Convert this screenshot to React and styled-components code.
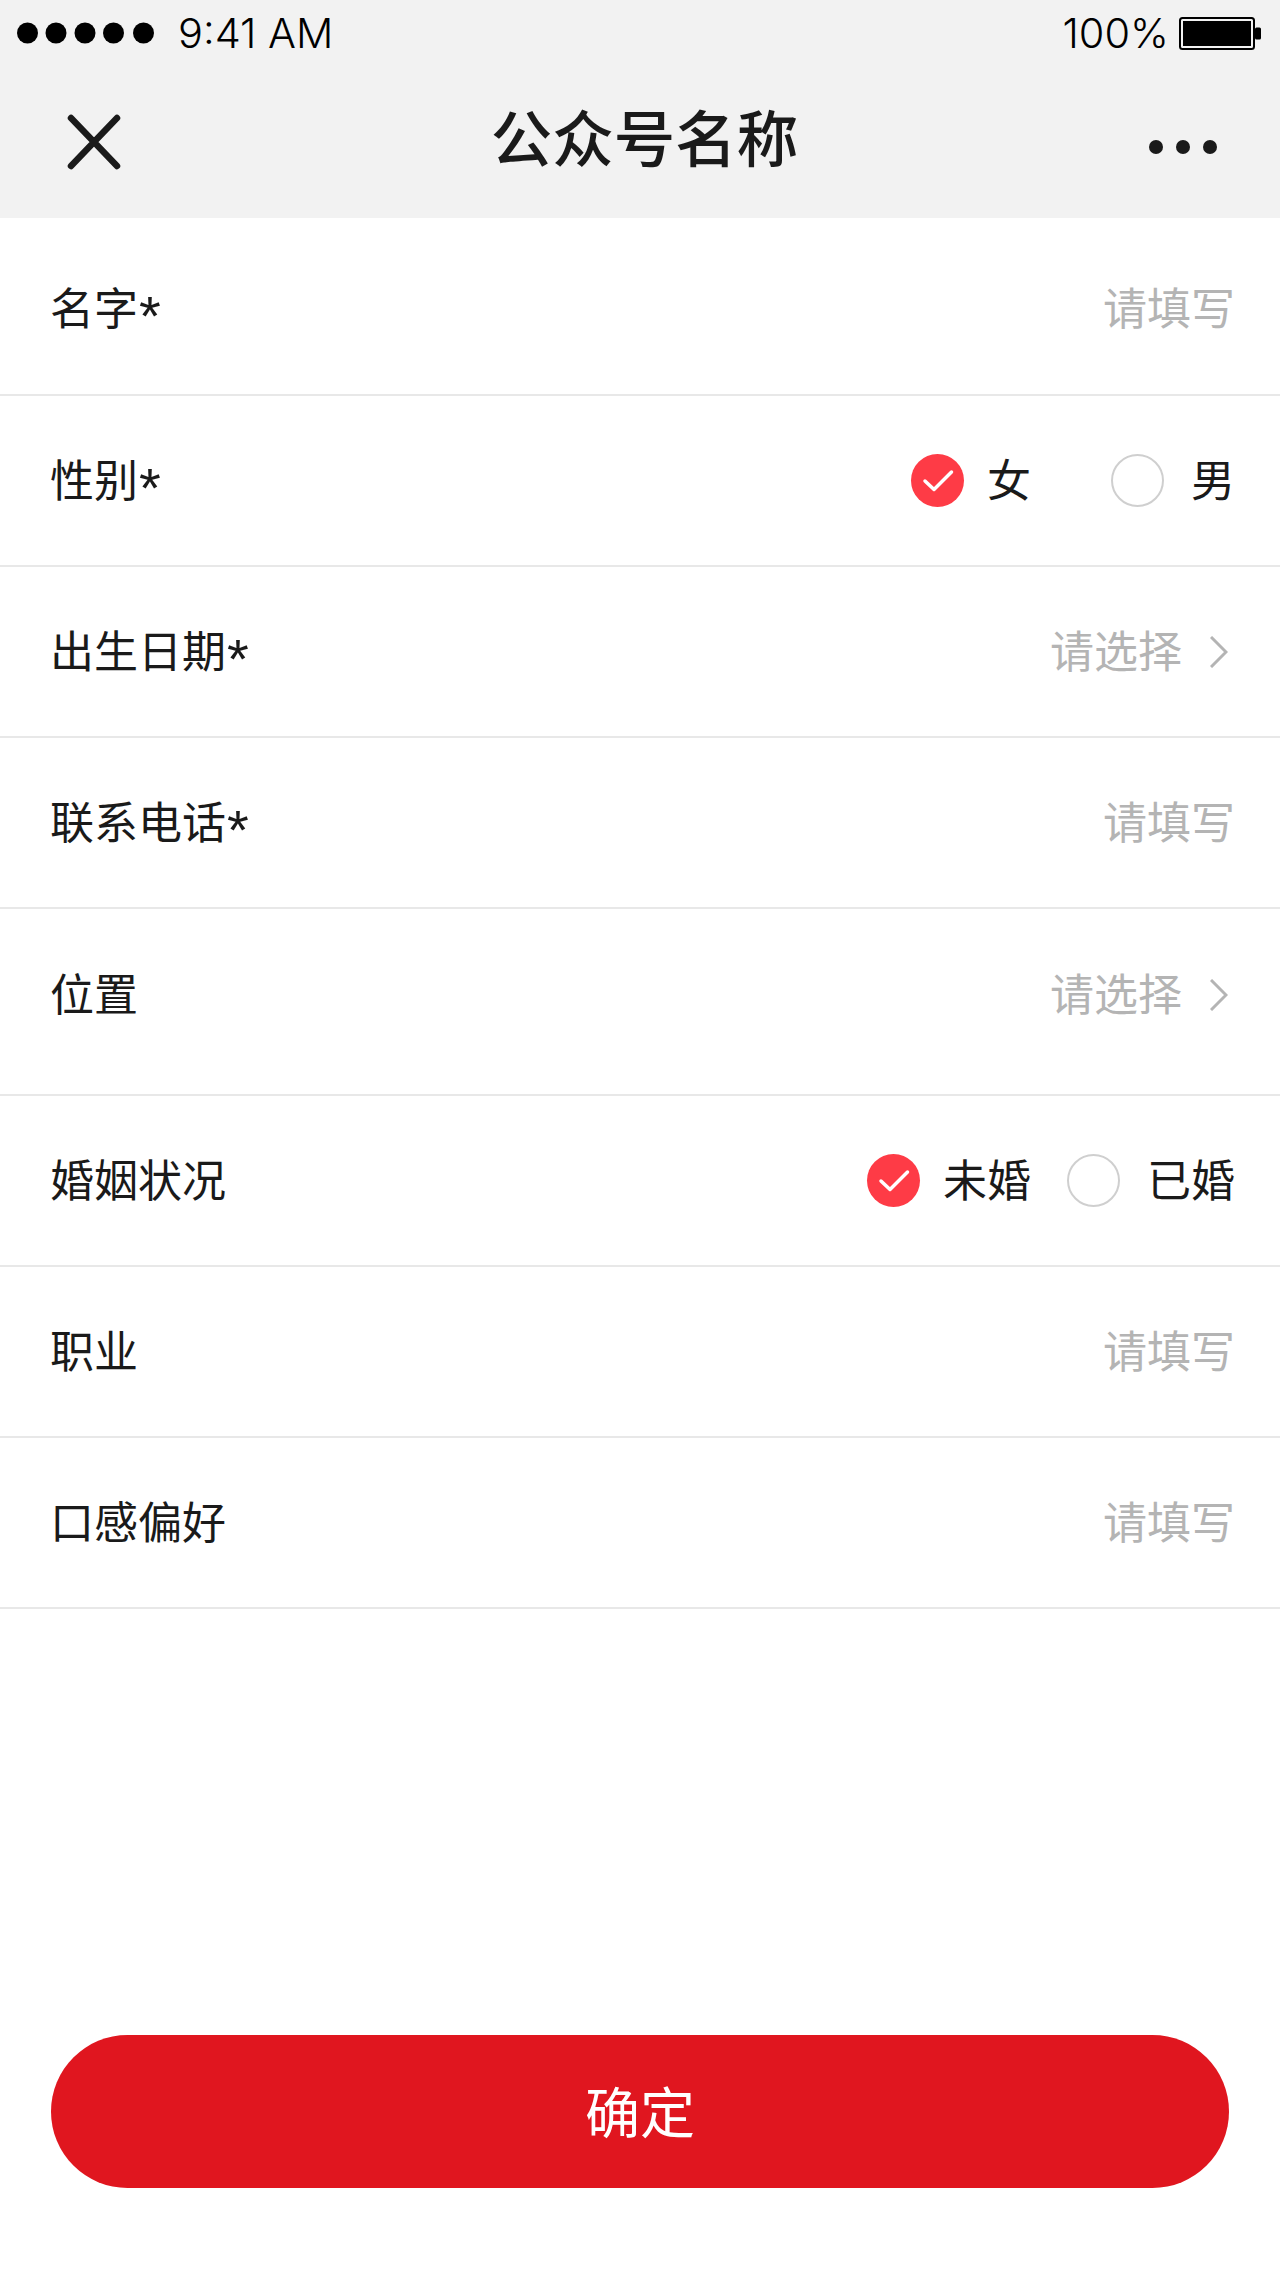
import React from "react";
import styled, { createGlobalStyle } from "styled-components";

const Global = createGlobalStyle`
  html, body { margin: 0; padding: 0; background: #fff; }
  body { font-family: "Noto Sans CJK SC", "Liberation Sans", sans-serif; color: #1a1a1a; }
`;

const Page = styled.div`
  width: 1280px;
  height: 2277px;
  display: flex;
  flex-direction: column;
  overflow: hidden;
`;
const Header = styled.header`
  height: 218px;
  background: #f2f2f2;
  display: flex;
  flex-direction: column;
`;
const StatusBar = styled.div`
  height: 66px;
  padding: 0 19px 0 17px;
  display: flex;
  align-items: center;
  justify-content: space-between;
  color: #000;
  font-family: Inter, "Liberation Sans", sans-serif;
  font-weight: 300;
  font-size: 41.500px;
`;
const StatusGroup = styled.div`
  display: flex;
  align-items: center;
  gap: ${(p) => p.$gap}px;
`;
const NavBar = styled.div`
  flex: 1;
  display: flex;
  align-items: center;
  justify-content: space-between;
  padding: 0 62px 0 66px;
  position: relative;
`;
const Title = styled.h1`
  position: absolute;
  left: 0;
  right: 0;
  top: 32px;
  margin: 0;
  text-align: center;
  font-size: 61.500px;
  line-height: 76px;
  font-weight: 500;
  color: #1a1a1a;
  padding-left: 9px;
`;
const Form = styled.main`
  display: flex;
  flex-direction: column;
`;
const Row = styled.div`
  height: ${(p) => p.$h}px;
  box-sizing: border-box;
  padding: 0 45px ${(p) => p.$pb ?? 5}px 50px;
  border-bottom: 2px solid #e8e8e8;
  display: flex;
  align-items: center;
  justify-content: space-between;
  font-size: 44px;
  line-height: 60px;
`;
const Label = styled.span`
  color: #1a1a1a;
  font-weight: 400;
`;
const Star = styled.span`
  font-family: "Liberation Sans", sans-serif;
  font-size: 56px;
  line-height: 0;
  vertical-align: -10px;
  margin-left: 1px;
`;
const Placeholder = styled.span`
  color: #b4b4b4;
  font-weight: 400;
`;
const Picker = styled.div`
  display: flex;
  align-items: center;
  gap: 28px;
  padding-right: 7px;
`;
const ChevronIcon = styled.svg`
  margin-top: 6px;
`;
const Options = styled.div`
  display: flex;
  align-items: center;
  gap: ${(p) => p.$gap}px;
`;
const Option = styled.div`
  display: flex;
  align-items: center;
  gap: ${(p) => (p.$on ? 23 : 27)}px;
  font-weight: 400;
`;
const Radio = styled.span`
  width: 53px;
  height: 53px;
  margin-top: 5px;
  box-sizing: border-box;
  border-radius: 50%;
  display: flex;
  align-items: center;
  justify-content: center;
  background: ${(p) => (p.$on ? "#fe3b46" : "#fff")};
  border: ${(p) => (p.$on ? "none" : "2px solid #cfcfcf")};
`;
const Footer = styled.div`
  padding: 426px 51px 0;
`;
const Submit = styled.button`
  width: 100%;
  height: 153px;
  border: none;
  border-radius: 77px;
  background: #e0161f;
  color: #fff;
  font-family: inherit;
  font-size: 55px;
  font-weight: 400;
  padding: 0 0 5px;
`;

const Check = () => (
  <svg width="32" height="24" viewBox="0 0 32 24" fill="none">
    <path d="M3 12l9 8.500L29.500 3" stroke="#fff" strokeWidth="3.500" strokeLinecap="round" strokeLinejoin="round" />
  </svg>
);
const Chevron = () => (
  <ChevronIcon width="18" height="32" viewBox="0 0 18 32" fill="none">
    <path d="M1 1l15 15L1 31" stroke="#b4b4b4" strokeWidth="3" />
  </ChevronIcon>
);
const Signal = () => (
  <svg width="139" height="22" viewBox="0 0 139 22">
    {[10.5, 39, 68, 96.5, 126.5].map((x) => (
      <circle key={x} cx={x} cy="11" r="10.500" fill="#000" />
    ))}
  </svg>
);
const Battery = () => (
  <svg width="82" height="33" viewBox="0 0 82 33">
    <rect x="1" y="1" width="74" height="31" rx="2.500" fill="none" stroke="#000" strokeWidth="2" />
    <rect x="4" y="4" width="68" height="25" fill="#000" />
    <rect x="76" y="10.500" width="6" height="12" rx="1.500" fill="#000" />
  </svg>
);
const Close = () => (
  <svg width="56" height="56" viewBox="0 0 56 56" fill="none">
    <path d="M5 4l46 48M51 4L5 52" stroke="#1a1a1a" strokeWidth="6.500" strokeLinecap="round" />
  </svg>
);
const More = styled(({ className }) => (
  <svg className={className} width="70" height="16" viewBox="0 0 70 16">
    {[8, 35, 62].map((x) => (
      <circle key={x} cx={x} cy="8" r="7" fill="#1a1a1a" />
    ))}
  </svg>
))`
  margin-top: 10px;
`;

const Fill = () => <Placeholder>请填写</Placeholder>;
const Pick = () => (
  <Picker>
    <Placeholder>请选择</Placeholder>
    <Chevron />
  </Picker>
);
const Choice = ({ on, children }) => (
  <Option $on={on}>
    <Radio $on={on}>{on && <Check />}</Radio>
    {children}
  </Option>
);

export default function App() {
  return (
    <Page>
      <Global />
      <Header>
        <StatusBar>
          <StatusGroup $gap={22}>
            <Signal />
            <span>9:41 AM</span>
          </StatusGroup>
          <StatusGroup $gap={10}>
            <span>100%</span>
            <Battery />
          </StatusGroup>
        </StatusBar>
        <NavBar>
          <Close />
          <Title>公众号名称</Title>
          <More />
        </NavBar>
      </Header>
      <Form>
        <Row $h={178} $pb={1}><Label>名字<Star>*</Star></Label><Fill /></Row>
        <Row $h={171}>
          <Label>性别<Star>*</Star></Label>
          <Options $gap={80}>
            <Choice on>女</Choice>
            <Choice>男</Choice>
          </Options>
        </Row>
        <Row $h={171}><Label>出生日期<Star>*</Star></Label><Pick /></Row>
        <Row $h={171}><Label>联系电话<Star>*</Star></Label><Fill /></Row>
        <Row $h={187} $pb={19}><Label>位置</Label><Pick /></Row>
        <Row $h={171}>
          <Label>婚姻状况</Label>
          <Options $gap={36}>
            <Choice on>未婚</Choice>
            <Choice>已婚</Choice>
          </Options>
        </Row>
        <Row $h={171}><Label>职业</Label><Fill /></Row>
        <Row $h={171}><Label>口感偏好</Label><Fill /></Row>
      </Form>
      <Footer>
        <Submit>确定</Submit>
      </Footer>
    </Page>
  );
}
